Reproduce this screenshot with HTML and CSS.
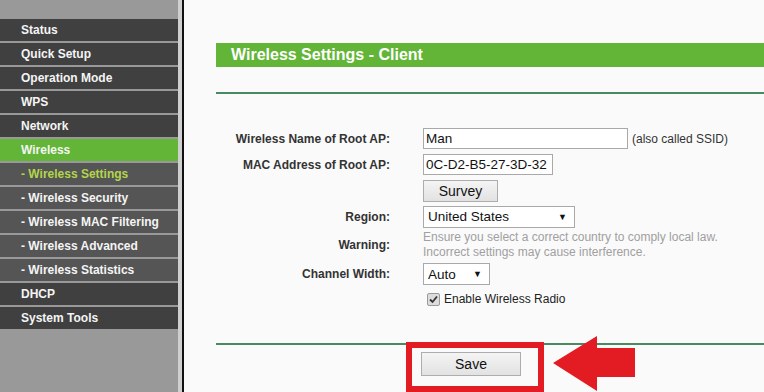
FILE: index.html
```html
<!DOCTYPE html>
<html>
<head>
<meta charset="utf-8">
<link rel="stylesheet" href="styles.css">
</head>
<body>
<nav class="sidebar">
  <div class="item">Status</div>
  <div class="item">Quick Setup</div>
  <div class="item">Operation Mode</div>
  <div class="item">WPS</div>
  <div class="item">Network</div>
  <div class="item active">Wireless</div>
  <div class="item sub current">- Wireless Settings</div>
  <div class="item sub">- Wireless Security</div>
  <div class="item sub">- Wireless MAC Filtering</div>
  <div class="item sub">- Wireless Advanced</div>
  <div class="item sub">- Wireless Statistics</div>
  <div class="item">DHCP</div>
  <div class="item">System Tools</div>
</nav>
<main class="main">
  <div class="title">Wireless Settings - Client</div>
  <div class="rule rule-top"></div>
  <div class="form">
    <div class="label">Wireless Name of Root AP:</div>
    <div class="field"><div class="input ssid">Man</div><span class="note">(also called SSID)</span></div>
    <div class="label">MAC Address of Root AP:</div>
    <div class="field"><div class="input mac">0C-D2-B5-27-3D-32</div></div>
    <div class="label"></div>
    <div class="field"><div class="btn survey">Survey</div></div>
    <div class="label">Region:</div>
    <div class="field"><div class="select region"><span>United States</span><span class="arrow">&#9660;</span></div></div>
    <div class="label">Warning:</div>
    <div class="field warn">Ensure you select a correct country to comply local law.<br>Incorrect settings may cause interference.</div>
    <div class="label">Channel Width:</div>
    <div class="field"><div class="select chan"><span>Auto</span><span class="arrow">&#9660;</span></div></div>
    <div class="label"></div>
    <div class="field"><span class="check"><svg width="9" height="9" viewBox="0 0 9 9"><path d="M1 4.5 L3.5 7 L8 1.5" fill="none" stroke="#333" stroke-width="1.8"/></svg></span><span class="check-label">Enable Wireless Radio</span></div>
  </div>
  <div class="rule rule-bottom"></div>
  <div class="save-row"><div class="btn save">Save</div></div>
  <div class="highlight"></div>
  <svg class="arrow-mark" width="84" height="56" viewBox="0 0 84 56"><path d="M0 27 L44 0 L44 12 L82 12 L82 41 L44 41 L44 55 Z" fill="#e31b23"/></svg>
</main>
</body>
</html>
```
FILE: styles.css
```css
* { box-sizing: border-box; }
html, body { margin: 0; padding: 0; }
body {
  width: 764px;
  height: 392px;
  overflow: hidden;
  display: flex;
  font-family: "Liberation Sans", Arial, sans-serif;
}
.sidebar {
  width: 182px;
  flex: none;
  background: #999999;
  border-right: 4px solid #cfcfcf;
  padding-top: 19px;
}
.item {
  height: 22px;
  line-height: 22px;
  margin-bottom: 2px;
  padding-left: 21px;
  background: #404040;
  color: #f4f4f4;
  font-weight: bold;
  font-size: 12px;
  white-space: nowrap;
}
.item.sub { background: #555555; }
.item.active { background: #62b536; }
.item.current { color: #b2d64a; }
.main {
  position: relative;
  flex: 1;
  background: #fafafa;
  border-left: 2px solid #111;
  padding-top: 43px;
  padding-left: 32px;
}
.title {
  height: 24px;
  line-height: 24px;
  background: #62b536;
  color: #fff;
  font-weight: bold;
  font-size: 16px;
  padding-left: 15px;
}
.rule {
  height: 2px;
  background: #4a8a63;
}
.rule-top { margin-top: 25px; }
.form {
  margin-top: 32px;
  display: grid;
  grid-template-columns: 174px auto;
  column-gap: 33px;
  grid-template-rows: 25px 27px 25px 27px 30px 28px 22px;
  align-items: center;
}
.label {
  text-align: right;
  font-weight: bold;
  font-size: 12px;
  color: #333;
  white-space: nowrap;
}
.field {
  display: flex;
  align-items: center;
  font-size: 12px;
  color: #333;
}
.input {
  height: 21px;
  line-height: 19px;
  border: 1px solid #a9a9a9;
  background: #fff;
  padding-left: 2px;
  font-size: 13.5px;
  color: #111;
}
.ssid { width: 205px; }
.mac { width: 130px; }
.note { margin-left: 4px; font-size: 12px; color: #333; }
.btn {
  border: 1px solid #adadad;
  background: linear-gradient(#f4f4f4, #e2e2e2);
  text-align: center;
  font-size: 14px;
  color: #111;
}
.survey { width: 75px; height: 22px; line-height: 20px; }
.select {
  height: 22px;
  border: 1px solid #a9a9a9;
  background: #fff;
  display: flex;
  justify-content: space-between;
  align-items: center;
  padding: 0 7px 0 4px;
  font-size: 13.5px;
  color: #111;
}
.select .arrow { font-size: 9px; }
.region { width: 152px; }
.chan { width: 67px; }
.warn {
  display: block;
  color: #a0a0a0;
  font-size: 12px;
  line-height: 15px;
}
.check {
  margin-left: 4px;
  width: 13px;
  height: 13px;
  border: 1px solid #9a9a9a;
  border-radius: 2px;
  background: #dcdcdc;
  display: flex;
  align-items: center;
  justify-content: center;
}
.check-label { margin-left: 4px; font-size: 12px; color: #222; }
.rule-bottom { margin-top: 33px; }
.save-row { padding-left: 205px; padding-top: 7px; }
.save { width: 100px; height: 24px; line-height: 22px; }
.highlight {
  position: absolute;
  left: 222px;
  top: 342px;
  width: 138px;
  height: 50px;
  border: 6px solid #e31b23;
}
.arrow-mark {
  position: absolute;
  left: 369px;
  top: 336px;
}
```
